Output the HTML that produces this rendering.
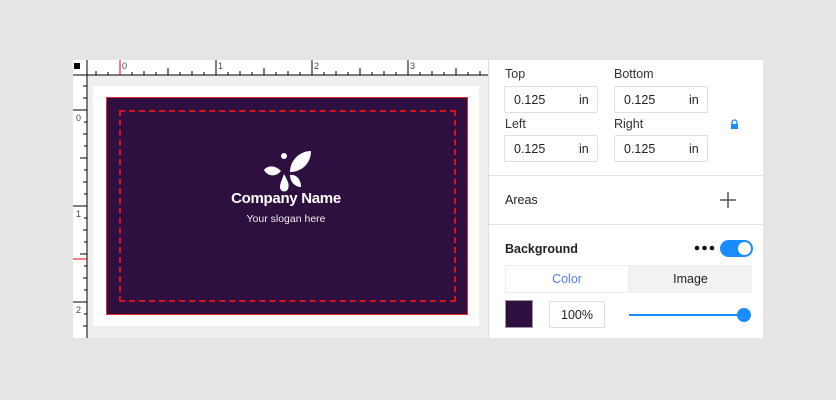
<!DOCTYPE html>
<html><head><meta charset="utf-8"><style>
*{margin:0;padding:0;box-sizing:border-box}
body{width:836px;height:400px;background:#e5e5e5;font-family:"Liberation Sans",sans-serif;position:relative;overflow:hidden}
.a{position:absolute}
.lbl{font-size:12.5px;color:#333}
.inp{position:absolute;width:94px;height:27px;border:1px solid #e0e0e0;border-radius:2px;background:#fff;font-size:12.5px;color:#222}
.inp span{position:absolute;top:6px}
</style></head><body>
<div class="a" style="left:73px;top:60px;width:415px;height:278px;background:#efefef"></div>
<svg class="a" style="left:73px;top:60px" width="415" height="278">
<rect x="0" y="0" width="415" height="15" fill="#fff"/>
<rect x="0" y="0" width="14" height="278" fill="#fff"/>
<line x1="0" y1="15" x2="415" y2="15" stroke="#000"/>
<line x1="14" y1="0" x2="14" y2="278" stroke="#000"/>
<rect x="1" y="3" width="6" height="6" fill="#000"/>
<g stroke="#000" stroke-width="1">
<path d="M23 15v-4M35 15v-3M47 15v-15M59 15v-3M71 15v-4M83 15v-3M95 15v-7M107 15v-3M119 15v-4M131 15v-3M143 15v-15M155 15v-3M167 15v-4M179 15v-3M191 15v-7M203 15v-3M215 15v-4M227 15v-3M239 15v-15M251 15v-3M263 15v-4M275 15v-3M287 15v-7M299 15v-3M311 15v-4M323 15v-3M335 15v-15M347 15v-3M359 15v-4M371 15v-3M383 15v-7M395 15v-3M407 15v-4"/>
<path d="M14 26h-4M14 38h-4M14 50h-14M14 62h-3M14 74h-4M14 86h-3M14 98h-7M14 110h-3M14 122h-4M14 134h-3M14 146h-14M14 158h-3M14 170h-4M14 182h-3M14 194h-7M14 206h-3M14 218h-4M14 230h-3M14 242h-14M14 254h-3M14 266h-4"/>
</g>
<line x1="47" y1="0" x2="47" y2="15" stroke="#d00"/>
<line x1="0" y1="199" x2="14" y2="199" stroke="#d00"/>
<g font-size="9" fill="#444" font-family="Liberation Sans"><text x="49" y="9">0</text><text x="145" y="9">1</text><text x="241" y="9">2</text><text x="337" y="9">3</text>
<text x="3" y="61">0</text><text x="3" y="157">1</text><text x="3" y="253">2</text></g>
</svg>
<div class="a" style="left:93px;top:86px;width:386px;height:240px;background:#fff"></div>
<div class="a" style="left:106px;top:97px;width:362px;height:218px;background:#2e1040;border:1.5px solid #e5282e"></div>
<div class="a" style="left:119px;top:110px;width:337px;height:192px;border:2px dashed #d7141e"></div>
<svg class="a" style="left:262px;top:150px" width="52" height="46">
<g fill="#fff">
<path d="M28 22 C28 10 38 1 49 1 C49 13 40 22 28 22Z"/>
<circle cx="22" cy="6" r="3"/>
<path d="M2 20 C6 15 13 15 19 21 C14 27 6 27 2 20Z"/>
<path d="M22 24 C25 30 28 34 26 39 C24 43 18 42 18 37 C18 33 20 30 22 24Z"/>
<path d="M28 25 C34 24 39 29 39 37 C33 37 28 32 28 25Z"/>
</g></svg>
<div class="a" style="left:186px;top:190px;width:200px;text-align:center;color:#fff;font-size:15px;font-weight:bold;letter-spacing:-0.3px">Company Name</div>
<div class="a" style="left:186px;top:213px;width:200px;text-align:center;color:#eee;font-size:10.5px">Your slogan here</div>

<div class="a" style="left:488px;top:60px;width:275px;height:278px;background:#fff;border-left:1px solid #ddd"></div>
<div class="a lbl" style="left:505px;top:67px">Top</div>
<div class="a lbl" style="left:614px;top:67px">Bottom</div>
<div class="inp" style="left:504px;top:86px"><span style="left:9px">0.125</span><span style="left:74px">in</span></div>
<div class="inp" style="left:614px;top:86px"><span style="left:9px">0.125</span><span style="left:74px">in</span></div>
<div class="a lbl" style="left:505px;top:117px">Left</div>
<div class="a lbl" style="left:614px;top:117px">Right</div>
<div class="inp" style="left:504px;top:135px"><span style="left:9px">0.125</span><span style="left:74px">in</span></div>
<div class="inp" style="left:614px;top:135px"><span style="left:9px">0.125</span><span style="left:74px">in</span></div>
<svg class="a" style="left:730px;top:119px" width="9" height="11"><path d="M2 5V3.5a2.5 2.5 0 015 0V5" stroke="#1a8cff" fill="none" stroke-width="1.3"/><rect x="1" y="5" width="7" height="5" fill="#1a8cff"/></svg>
<div class="a" style="left:489px;top:175px;width:274px;height:1px;background:#e3e3e3"></div>
<div class="a lbl" style="left:505px;top:193px;color:#222">Areas</div>
<svg class="a" style="left:719px;top:191px" width="18" height="18"><path d="M9 1v16M1 9h16" stroke="#555" stroke-width="1.5"/></svg>
<div class="a" style="left:489px;top:224px;width:274px;height:1px;background:#e3e3e3"></div>
<div class="a lbl" style="left:505px;top:242px;color:#222;font-weight:bold">Background</div>
<svg class="a" style="left:694px;top:244px" width="22" height="8"><circle cx="3" cy="4" r="2.3" fill="#111"/><circle cx="10.5" cy="4" r="2.3" fill="#111"/><circle cx="18" cy="4" r="2.3" fill="#111"/></svg>
<div class="a" style="left:720px;top:240px;width:33px;height:17px;border-radius:9px;background:#1a8cff"><div class="a" style="left:18px;top:2px;width:13px;height:13px;border-radius:50%;background:#fff"></div></div>
<div class="a" style="left:505px;top:265px;width:247px;height:28px;background:#f2f2f2"></div>
<div class="a" style="left:505px;top:265px;width:124px;height:28px;background:#fff;border:1px solid #eee;text-align:center;line-height:26px;font-size:12.5px;color:#5a7cf0">Color</div>
<div class="a" style="left:629px;top:265px;width:123px;height:28px;text-align:center;line-height:28px;font-size:12.5px;color:#222">Image</div>
<div class="a" style="left:505px;top:300px;width:28px;height:28px;background:#2e1040;border:1px solid #999"></div>
<div class="a" style="left:549px;top:301px;width:56px;height:27px;border:1px solid #ddd;border-radius:2px;text-align:center;line-height:26px;font-size:12.5px;color:#222">100%</div>
<div class="a" style="left:629px;top:314px;width:115px;height:2px;background:#1a8cff"></div>
<div class="a" style="left:737px;top:308px;width:14px;height:14px;border-radius:50%;background:#1a8cff"></div>
</body></html>
